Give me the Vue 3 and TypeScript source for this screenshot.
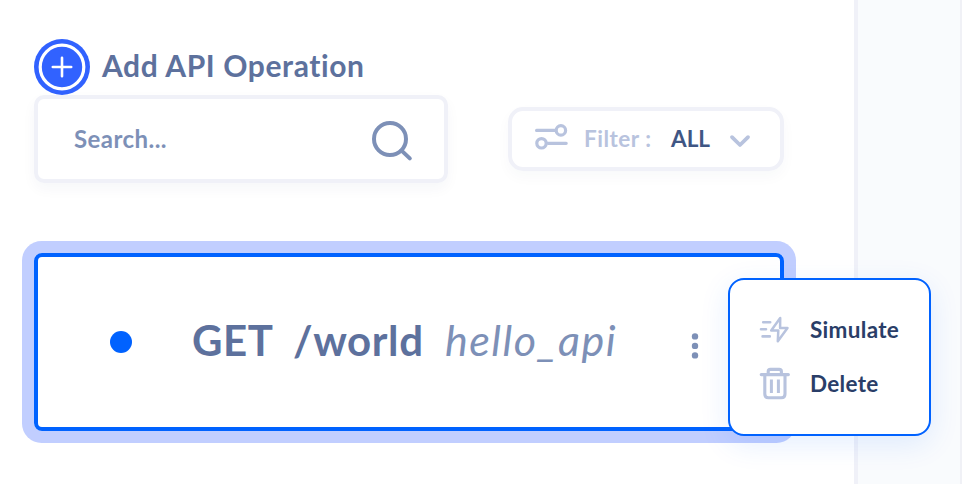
<script setup lang="ts">
import { ref } from 'vue'

interface Operation {
  method: string
  path: string
  name: string
}

const search = ref('')
const filter = ref('ALL')
const operation: Operation = { method: 'GET', path: '/world', name: 'hello_api' }
</script>

<template>
  <div class="page">
    <main class="list">
      <button class="add" type="button">
        <svg class="add-icon" viewBox="0 0 56 56">
          <circle cx="28" cy="28" r="28" fill="#3162ff" />
          <circle cx="28" cy="28" r="21.8" fill="none" stroke="#fff" stroke-width="3.2" />
          <path d="M28 18.8v18.4M18.8 28h18.4" stroke="#fff" stroke-width="2.6" stroke-linecap="round" />
        </svg>
        <span class="add-label">Add API Operation</span>
      </button>

      <div class="toolbar">
        <label class="search">
          <input v-model="search" class="search-input" type="text" placeholder="Search..." />
          <svg class="search-icon" viewBox="0 0 42 42">
            <circle cx="19" cy="19" r="16" />
            <path d="M30.6 30.6L38.8 38.4" />
          </svg>
        </label>
        <button class="filter" type="button">
          <svg class="filter-icon" viewBox="0 0 34 28">
            <path d="M2.6 8.4H21M14 21.3H32.2" />
            <circle cx="26.9" cy="8.4" r="4.7" />
            <circle cx="7.5" cy="21.3" r="4.7" />
          </svg>
          <span class="filter-label">Filter :</span>
          <span class="filter-value">{{ filter }}</span>
          <svg class="chevron" viewBox="0 0 22 14"><path d="M3 3.2L11 11L19 3.2" /></svg>
        </button>
      </div>

      <section class="card">
        <span class="status"></span>
        <span class="method">{{ operation.method }}</span>
        <span class="path">{{ operation.path }}</span>
        <em class="name">{{ operation.name }}</em>
        <svg class="more" viewBox="0 0 8 28">
          <circle cx="4" cy="4.4" r="3.2" />
          <circle cx="4" cy="13.9" r="3.2" />
          <circle cx="4" cy="23.4" r="3.2" />
        </svg>
        <div class="menu">
          <div class="menu-item">
            <svg class="menu-icon" viewBox="0 0 32 34">
              <path d="M4.2 9.3h7M2 16.3h5M3.6 23.4h7.2" stroke-width="2.6" />
              <path d="M21.2 4.9L12.2 17.4H19.3L18.8 28.3L28.5 14.9H21.1Z" stroke-width="2.5" />
            </svg>
            <span class="menu-label">Simulate</span>
          </div>
          <div class="menu-item">
            <svg class="menu-icon" viewBox="0 0 32 34">
              <path d="M2.2 7.6H29.4M9.2 7.2V4.6Q9.2 2.4 11.4 2.4H20.2Q22.4 2.4 22.4 4.6V7.2M5.8 7.6V27Q5.8 30.8 9.4 30.8H22.4Q26 30.8 26 27V7.6" stroke-width="3.1" />
              <path d="M12.4 12.6V26M19.4 12.6V26" stroke-width="3" stroke-linecap="butt" />
            </svg>
            <span class="menu-label">Delete</span>
          </div>
        </div>
      </section>
    </main>
    <aside class="panel"></aside>
  </div>
</template>

<style>
body {
  background: #fff;
  overflow: hidden;
}
</style>

<style scoped>
.page {
  display: flex;
  width: 962px;
  height: 484px;
  overflow: hidden;
  font-family: Lato, "Liberation Sans", sans-serif;
  font-variant-ligatures: none;
  color: #5d719d;
}
.list {
  box-sizing: border-box;
  width: 854px;
  flex: none;
  padding: 39px 70px 0 34px;
}
.panel {
  box-sizing: border-box;
  width: 108px;
  border-left: 4px solid #f0f1f8;
  border-right: 2px solid #f0f1f6;
  background: #f9fbfd;
}
svg {
  display: block;
  flex: none;
  fill: none;
  stroke-linecap: round;
  stroke-linejoin: round;
}
button {
  margin: 0;
  padding: 0;
  border: 0;
  background: none;
  font-family: inherit;
  color: inherit;
}
span,
em {
  white-space: nowrap;
}
.add {
  display: flex;
  align-items: center;
  gap: 12px;
  height: 56px;
}
.add-icon {
  width: 56px;
  height: 56px;
}
.add-label {
  padding-bottom: 4px;
  font-size: 30px;
  line-height: 36px;
  font-weight: 700;
  letter-spacing: 0.6px;
}
.toolbar {
  display: flex;
  align-items: center;
  justify-content: space-between;
  height: 88px;
}
.search {
  box-sizing: border-box;
  display: flex;
  align-items: center;
  justify-content: space-between;
  width: 414px;
  height: 88px;
  padding: 0 31px 0 36px;
  border: 4px solid #f0f1f8;
  border-radius: 10px;
  box-shadow: 0 6px 14px rgba(30, 50, 90, 0.04);
}
.search-input {
  width: 200px;
  padding: 0 0 1px;
  border: 0;
  outline: 0;
  background: none;
  font: 700 24px/30px Lato, "Liberation Sans", sans-serif;
  letter-spacing: 0.45px;
}
.search-input::placeholder {
  color: #7d90b7;
  opacity: 1;
}
.search-icon {
  width: 42px;
  height: 42px;
  margin-top: 4px;
  stroke: #7d90b7;
  stroke-width: 4;
}
.filter {
  box-sizing: border-box;
  display: flex;
  align-items: center;
  width: 276px;
  height: 64px;
  padding-left: 22px;
  border: 4px solid #f0f1f8;
  border-radius: 15px;
  box-shadow: 0 6px 14px rgba(30, 50, 90, 0.03);
  font-size: 22.5px;
  font-weight: 700;
}
.filter-icon {
  width: 34px;
  height: 28px;
  margin-top: -6px;
  stroke: #b8c3de;
  stroke-width: 3.2;
}
.filter-label {
  width: 87px;
  margin-left: 16px;
  padding-bottom: 2px;
  text-align: left;
  letter-spacing: 0.5px;
  color: #b8c3de;
}
.filter-value {
  width: 58px;
  padding-bottom: 2px;
  text-align: left;
  color: #3f5684;
}
.chevron {
  width: 22px;
  height: 14px;
  margin-top: 3px;
  stroke: #b8c3de;
  stroke-width: 3.8;
}
.card {
  position: relative;
  box-sizing: border-box;
  display: flex;
  align-items: center;
  width: 750px;
  height: 178px;
  margin-top: 70px;
  padding-left: 72px;
  border: 4px solid #0062ff;
  border-radius: 8px;
  box-shadow: 0 0 0 12px #c1ceff;
  font-size: 42px;
  line-height: 50px;
}
.status {
  width: 22px;
  height: 22px;
  border-radius: 50%;
  background: #0062ff;
}
.method,
.path,
.name {
  padding-bottom: 4px;
}
.method,
.path {
  font-weight: 700;
  letter-spacing: 0.6px;
}
.method {
  width: 101px;
  margin-left: 60px;
}
.path {
  width: 152px;
}
.name {
  width: 246px;
  font-size: 43px;
  letter-spacing: 1.5px;
  color: #7d90b7;
}
.more {
  width: 8px;
  height: 28px;
  margin-top: 8px;
  fill: #7d90b7;
}
.menu {
  position: absolute;
  top: 21px;
  left: 690px;
  box-sizing: border-box;
  display: flex;
  flex-direction: column;
  gap: 20px;
  width: 203px;
  height: 158px;
  padding: 33px 0 0 29px;
  border: 2px solid #0062ff;
  border-radius: 16px;
  background: #fff;
  box-shadow: 0 8px 30px rgba(0, 98, 255, 0.11);
}
.menu-item {
  display: flex;
  align-items: center;
  gap: 19px;
  height: 34px;
  font-size: 22.5px;
  line-height: 28px;
  font-weight: 700;
  color: #2a3e68;
}
.menu-label {
  letter-spacing: 0.3px;
}
.menu-icon {
  width: 32px;
  height: 34px;
  stroke: #b8c3de;
}
</style>
